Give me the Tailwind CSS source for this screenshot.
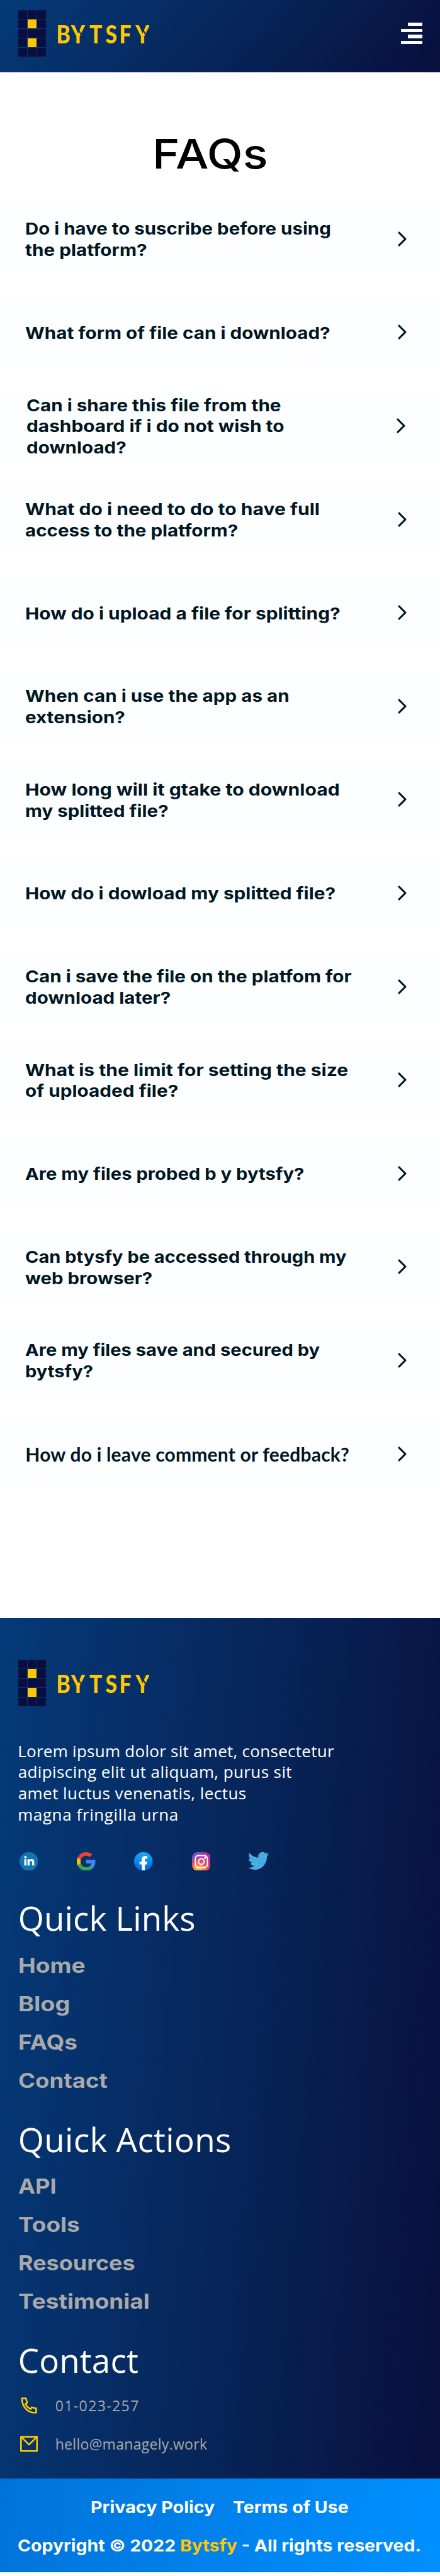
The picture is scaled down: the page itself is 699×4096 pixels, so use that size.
<!DOCTYPE html>
<html lang="en">
<head>
<meta charset="utf-8">
<title>Bytsfy FAQs</title>
<script src="https://cdn.jsdelivr.net/npm/@tailwindcss/browser@4"></script>
</head>
<body class="w-[699px] bg-white font-['Inter',sans-serif]">

<svg class="hidden">
  <symbol id="logo" viewBox="153 85 1112 398">
    <g fill="#080f3e">
      <path d="M159 86H228V160H153V92Q153 86 159 86Z"/><path d="M233 86H307V160H233Z"/><path d="M312 86H381Q387 86 387 92V160H312Z"/>
      <path d="M153 165H228V240H153Z"/><path d="M312 165H387V240H312Z"/>
      <path d="M153 246H228V320H153Z"/><rect x="233" y="246" width="154" height="74" rx="6"/>
      <path d="M153 325H228V400H153Z"/><path d="M312 325H387V400H312Z"/>
      <path d="M153 406H228V480H159Q153 480 153 474Z"/><path d="M233 406H307V480H233Z"/><path d="M312 406H387V474Q387 480 381 480H312Z"/>
    </g>
    <path fill="#ffc700" d="M233 165H307V240H233ZM233 325H307V400H233Z"/>
    <text transform="scale(.85 1)" x="560 706 888 1048 1187 1348" y="365" font-family="Lato" font-weight="900" font-size="211" fill="#ffc700">BYTSFY</text>
    <path d="M652 230L684 290M1198 230L1230 290" stroke="#062e68" stroke-width="10" fill="none"/>
  </symbol>
  <symbol id="chev" viewBox="0 0 16 26"><path d="M3 3L13 13L3 23" fill="none" stroke="#001621" stroke-width="3.1" stroke-linecap="round" stroke-linejoin="round"/></symbol>
</svg>

<header class="flex h-[114.9px] items-start justify-between bg-[linear-gradient(132deg,#043a79_0%,#07285d_45%,#080f3d_100%)] pl-[28.7px] pr-[28.5px]">
  <svg class="mt-[16px] h-[74.7px] w-[208.6px]"><use href="#logo"/></svg>
  <div class="mt-[36px] flex w-[34px] flex-col items-end gap-[4.5px]">
    <span class="h-[5.2px] w-[22.4px] rounded-[1px] bg-white"></span>
    <span class="h-[5.2px] w-full rounded-[1px] bg-white"></span>
    <span class="h-[5.2px] w-[22.4px] rounded-[1px] bg-white"></span>
    <span class="h-[5.2px] w-full rounded-[1px] bg-white"></span>
  </div>
</header>

<main class="h-[2457.7px]">
  <h1 class="mb-[40.5px] pt-[90px] pl-[242px] text-[65px] leading-[80px] font-medium text-black"><span class="inline-block origin-left scale-x-[1.14]">FAQs</span></h1>
  <div class="flex flex-col gap-[39.6px] text-[26px] leading-[33.75px] font-bold whitespace-nowrap text-[#001621] [&>div]:flex [&>div]:h-[109px] [&>div]:items-center [&>div]:justify-between [&>div]:bg-[#fcfeff] [&>div]:pr-[52.5px] [&>div]:pl-[40.3px] [&_p]:pt-[2.4px] [&_span]:block [&_span]:origin-left [&_svg]:h-[26px] [&_svg]:w-[16px]">
    <div><p><span class="scale-x-[1.132]">Do i have to suscribe before using</span><span class="scale-x-[1.143]">the platform?</span></p><svg><use href="#chev"/></svg></div>
    <div><p><span class="scale-x-[1.141]">What form of file can i download?</span></p><svg><use href="#chev"/></svg></div>
    <div><p class="ml-[1.5px]"><span class="scale-x-[1.141]">Can i share this file from the</span><span class="scale-x-[1.148]">dashboard if i do not wish to</span><span class="scale-x-[1.138]">download?</span></p><svg class="mr-[2px]"><use href="#chev"/></svg></div>
    <div><p><span class="scale-x-[1.156]">What do i need to do to have full</span><span class="scale-x-[1.138]">access to the platform?</span></p><svg><use href="#chev"/></svg></div>
    <div><p><span class="scale-x-[1.149]">How do i upload a file for splitting?</span></p><svg><use href="#chev"/></svg></div>
    <div><p><span class="scale-x-[1.14]">When can i use the app as an</span><span class="scale-x-[1.138]">extension?</span></p><svg><use href="#chev"/></svg></div>
    <div><p><span class="scale-x-[1.16]">How long will it gtake to download</span><span class="scale-x-[1.134]">my splitted file?</span></p><svg><use href="#chev"/></svg></div>
    <div><p><span class="scale-x-[1.145]">How do i dowload my splitted file?</span></p><svg><use href="#chev"/></svg></div>
    <div><p><span class="scale-x-[1.141]">Can i save the file on the platfom for</span><span class="scale-x-[1.138]">download later?</span></p><svg><use href="#chev"/></svg></div>
    <div><p><span class="scale-x-[1.153]">What is the limit for setting the size</span><span class="scale-x-[1.145]">of uploaded file?</span></p><svg><use href="#chev"/></svg></div>
    <div><p><span class="scale-x-[1.124]">Are my files probed b y bytsfy?</span></p><svg><use href="#chev"/></svg></div>
    <div><p><span class="scale-x-[1.116]">Can btysfy be accessed through my</span><span class="scale-x-[1.13]">web browser?</span></p><svg><use href="#chev"/></svg></div>
    <div><p><span class="scale-x-[1.12]">Are my files save and secured by</span><span class="scale-x-[1.12]">bytsfy?</span></p><svg><use href="#chev"/></svg></div>
    <div><p class="font-['Lato',sans-serif] text-[30px] tracking-[0.2px]"><span>How do i leave comment or feedback?</span></p><svg><use href="#chev"/></svg></div>
  </div>
</main>

<footer class="bg-[linear-gradient(95deg,#043a79_0%,#07285d_45%,#080f3d_100%)]">
  <div class="h-[1368.6px] pt-[66.4px] pl-[28.7px]">
    <svg class="h-[74.7px] w-[208.6px]"><use href="#logo"/></svg>
    <p class="mt-[54px] font-['Open_Sans',sans-serif] text-[26px] leading-[33.75px] whitespace-nowrap text-white [&>span]:block">
      <span class="-ml-[0.5px] tracking-[0.27px]">Lorem ipsum dolor sit amet, consectetur</span>
      <span class="tracking-[0.4px]">adipiscing elit ut aliquam, purus sit</span>
      <span class="tracking-[0.45px]">amet luctus venenatis, lectus</span>
      <span class="-ml-[0.5px] tracking-[0.6px]">magna fringilla urna</span>
    </p>

    <div class="mt-[42px] ml-[2px] flex h-[29.6px] items-center gap-[61.8px]">
      <svg class="size-[29.6px]" viewBox="0 0 157 157"><circle cx="78.500" cy="78.500" r="78.500" fill="#1275b1"/><g fill="#fff"><circle cx="50" cy="43" r="10.500"/><path d="M40.500 60H58V113H40.500ZM67 60H84V67C89 61 95 58 102 58C117 58 124 67 124 84V113H106V87C106 79 103 74 96 74C89 74 85 79 85 87V113H67Z"/></g></svg>
      <svg class="size-[29.6px]" viewBox="2 2 44 44"><path fill="#4285f4" d="M45.600 20.200H24v8.400h12.400c-.7 3.100-2.400 5.700-4.900 7.400l7 5.600C43.200 37.400 46 31.300 46 24c0-1.300-.1-2.600-.4-3.800z"/><path fill="#34a853" d="M24 46c5.900 0 10.900-1.900 14.500-5.200l-7-5.400c-2 1.300-4.500 2.100-7.500 2.100-5.800 0-10.700-3.900-12.500-9.200l-7.200 5.600C7.900 41.100 15.400 46 24 46z"/><path fill="#fbbc05" d="M11.500 28.300c-.5-1.300-.7-2.800-.7-4.300s.2-3 .7-4.300L4.300 14.100C2.800 17.100 2 20.400 2 24s.8 6.900 2.300 9.900z"/><path fill="#eb4335" d="M24 10.500c3.300 0 6.200 1.100 8.500 3.300l6.300-6.200C34.900 4.100 29.900 2 24 2 15.400 2 7.900 6.900 4.300 14.100l7.200 5.600c1.800-5.300 6.700-9.200 12.500-9.200z"/></svg>
      <svg class="size-[29.6px]" viewBox="0 0 157 157"><defs><linearGradient id="fb" x1="0" y1="0" x2="0" y2="1"><stop stop-color="#18acfe"/><stop offset="1" stop-color="#0163e0"/></linearGradient></defs><circle cx="78.500" cy="78.500" r="78.500" fill="url(#fb)"/><path fill="#fff" d="M66 157V103H46V81H64V66C64 43 76 33 96 33H112V54H102C93 54 91 59 91 66V81H112L109 103H91V157Z"/></svg>
      <svg class="size-[29.6px]" viewBox="0 0 157 157"><defs><radialGradient id="ig" cx=".35" cy="1.050" r="1.050"><stop stop-color="#e6d9a0"/><stop offset=".12" stop-color="#f8b860"/><stop offset=".32" stop-color="#ff8a32"/><stop offset=".55" stop-color="#e0406a"/><stop offset=".8" stop-color="#c02f94"/><stop offset="1" stop-color="#a534a8"/></radialGradient><radialGradient id="ib" cx=".1" cy="0" r=".55"><stop stop-color="#4668e0"/><stop offset="1" stop-color="#4668e0" stop-opacity="0"/></radialGradient></defs><rect width="157" height="157" rx="48" fill="url(#ig)"/><rect width="157" height="157" rx="48" fill="url(#ib)"/><g fill="none" stroke="#fff" stroke-width="11"><rect x="28.500" y="28.500" width="101" height="101" rx="26"/><circle cx="79" cy="79" r="24"/></g><circle cx="110" cy="48" r="9" fill="#fff"/></svg>
      <svg class="-ml-[2px] h-[28px] w-[33.4px]" viewBox="0 2.250 24 19.500" preserveAspectRatio="none"><path fill="#48abe1" d="M23.953 4.570a10 10 0 01-2.825.775 4.958 4.958 0 002.163-2.723c-.951.555-2.005.959-3.127 1.184a4.920 4.920 0 00-8.384 4.482C7.690 8.095 4.067 6.130 1.640 3.162a4.822 4.822 0 00-.666 2.475c0 1.710.870 3.213 2.188 4.096a4.904 4.904 0 01-2.228-.616v.060a4.923 4.923 0 003.946 4.827 4.996 4.996 0 01-2.212.085 4.936 4.936 0 004.604 3.417 9.867 9.867 0 01-6.102 2.105c-.390 0-.779-.023-1.170-.067a13.995 13.995 0 007.557 2.209c9.053 0 13.998-7.496 13.998-13.985 0-.210 0-.420-.015-.630A9.935 9.935 0 0024 4.590z"/></svg>
    </div>

    <h2 class="mt-[44.2px] font-['Open_Sans',sans-serif] text-[53px] leading-[64px] font-medium tracking-[0.1px] text-white">Quick Links</h2>
    <ul class="mt-[13.7px] text-[32.4px] leading-[60.8px] font-bold text-[#a9a9a9] [&_li]:w-fit [&_li]:origin-left">
      <li class="scale-x-[1.147]">Home</li><li class="scale-x-[1.17]">Blog</li><li class="scale-x-[1.144]">FAQs</li><li class="scale-x-[1.128]">Contact</li>
    </ul>
    <h2 class="mt-[30.6px] font-['Open_Sans',sans-serif] text-[53px] leading-[64px] font-medium tracking-[0.3px] text-white">Quick Actions</h2>
    <ul class="mt-[13.5px] text-[32.4px] leading-[60.8px] font-bold text-[#a9a9a9] [&_li]:w-fit [&_li]:origin-left">
      <li class="scale-x-[1.12]">API</li><li class="scale-x-[1.14]">Tools</li><li class="scale-x-[1.11]">Resources</li><li class="scale-x-[1.14]">Testimonial</li>
    </ul>
    <h2 class="mt-[30.5px] font-['Open_Sans',sans-serif] text-[53px] leading-[64px] font-medium tracking-[0.12px] text-white">Contact</h2>
    <div class="mt-[9.5px] ml-[2.9px] font-['Open_Sans',sans-serif] text-[23px] text-[#a9a9a9]">
      <div class="flex h-[60.8px] items-center gap-[28px]">
        <svg class="size-[28.1px]" viewBox="48 56 150 150"><path d="M63 70H97L107 107L93 118C103 138 118 152 137 161L147 145L184 155V191H172C110 190 63 140 63 70Z" fill="none" stroke="#ffc700" stroke-width="14" stroke-linejoin="round"/></svg>
        <span class="tracking-[1.4px]">01-023-257</span>
      </div>
      <div class="flex h-[60.8px] items-center gap-[28px]">
        <svg class="size-[28.1px]" viewBox="48 380 150 150"><path d="M55 394H191V515H55ZM59 398L123 461L187 398" fill="none" stroke="#ffc700" stroke-width="14" stroke-linejoin="round"/></svg>
        <span class="tracking-[0.3px]">hello@managely.work</span>
      </div>
    </div>
  </div>
  <div class="h-[149.1px] bg-[linear-gradient(96deg,#0073da_0%,#0090ff_100%)] pt-[14.8px] text-[26px] leading-[61px] font-bold whitespace-nowrap text-white [&_span]:inline-block">
    <div class="flex pl-[144px]"><a class="w-[226px]"><span class="origin-left scale-x-[1.103]">Privacy Policy</span></a><a><span class="origin-left scale-x-[1.096]">Terms of Use</span></a></div>
    <div class="pl-[28px]"><span class="origin-left scale-x-[1.0946]">Copyright © 2022 <b class="font-bold text-[#ffc700]">Bytsfy</b> - All rights reserved.</span></div>
  </div>
  <div class="h-[5.7px] bg-white"></div>
</footer>
</body>
</html>
